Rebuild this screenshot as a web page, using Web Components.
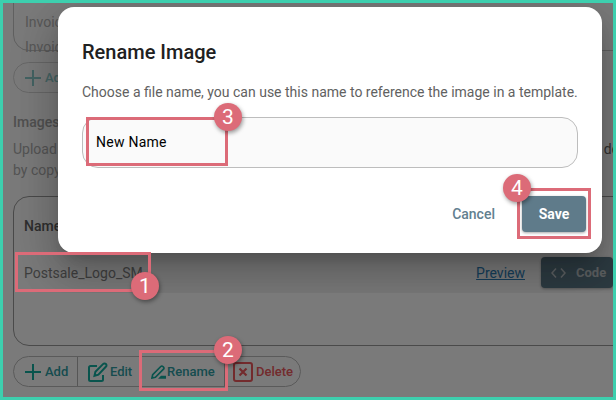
<!DOCTYPE html>
<html>
<head>
<meta charset="utf-8">
<style>
html, body { margin: 0; padding: 0; }
body { width: 616px; height: 400px; overflow: hidden; font-family: Roboto, "Liberation Sans", sans-serif; }
</style>
</head>
<body>
<shot-frame>
  <bg-page></bg-page>
  <rename-dialog slot="overlay"></rename-dialog>
  <call-out slot="overlay" n="1" x="15" y="252" w="136" h="40" bx="145" by="286"></call-out>
  <call-out slot="overlay" n="2" x="139" y="350" w="89" h="41" bx="228" by="350"></call-out>
  <call-out slot="overlay" n="3" x="86" y="117" w="142" h="49" bx="228" by="117"></call-out>
  <call-out slot="overlay" n="4" x="517" y="188" w="74" h="51" bx="517" by="188"></call-out>
</shot-frame>

<script>
class ShotFrame extends HTMLElement {
    connectedCallback() {
        this.attachShadow({ mode: 'open' });
        this.shadowRoot.innerHTML = `
            <style>
                :host {
                    display: block;
                    position: relative;
                    width: 616px;
                    height: 400px;
                    box-sizing: border-box;
                    border: 3px solid #3dcfae;
                    overflow: hidden;
                    background: #fff;
                }
                .backdrop {
                    position: absolute;
                    inset: 0;
                    background: rgba(0, 0, 0, 0.52);
                }
                .overlay {
                    position: absolute;
                    left: -3px;
                    top: -3px;
                    width: 616px;
                    height: 400px;
                }
            </style>
            <slot></slot>
            <div class="backdrop"></div>
            <div class="overlay"><slot name="overlay"></slot></div>
        `;
    }
}

class ToolButton extends HTMLElement {
    connectedCallback() {
        this.attachShadow({ mode: 'open' });
        this.shadowRoot.innerHTML = `
            <style>
                :host {
                    display: flex;
                    align-items: center;
                    height: 100%;
                    box-sizing: border-box;
                    font: 500 13px Roboto, sans-serif;
                    color: var(--tool-color, #2f9fa5);
                    border-right: 1px solid #b4b4b4;
                }
                :host(:last-child) { border-right: 0; }
                ::slotted(svg) { display: block; flex: none; color: var(--icon-color, #14b0a2); }
            </style>
            <slot></slot>
        `;
    }
}

class BgPage extends HTMLElement {
    connectedCallback() {
        this.attachShadow({ mode: 'open' });
        this.shadowRoot.innerHTML = `
            <style>
                :host {
                    display: block;
                    height: 394px;
                    padding-left: 10px;
                    font: 14px Roboto, sans-serif;
                    color: #858585;
                    overflow: hidden;
                }
                .top-card {
                    box-sizing: border-box;
                    width: 640px;
                    height: 70px;
                    margin-top: -22px;
                    border: 1px solid #c8c8c8;
                    border-radius: 16px;
                    padding: 28px 0 0 11px;
                    line-height: 25px;
                    color: #b8b8b8;
                }
                .group {
                    display: inline-flex;
                    box-sizing: border-box;
                    height: 31px;
                    border: 1px solid #bdbdbd;
                    border-radius: 16px;
                }
                .add-pill { display: flex; margin-top: 11px; width: 64px; border-color: #d8d8d8; }
                .add-pill div {
                    display: flex;
                    align-items: center;
                    gap: 4px;
                    padding-left: 11px;
                    font-size: 13px;
                    font-weight: 500;
                    color: #90d0d0;
                }
                h3 {
                    margin: 19px 0 0;
                    font: 500 14px/20px Roboto, sans-serif;
                    color: #a8a8a8;
                }
                .help { margin-top: 7px; line-height: 21px; color: #b0b0b0; }
                .help div { display: flex; justify-content: space-between; width: 606px; }
                .help div span:last-child { color: #666; }
                .file-card {
                    box-sizing: border-box;
                    width: 640px;
                    height: 150px;
                    margin-top: 15px;
                    border: 1px solid #9c9c9c;
                    border-radius: 16px;
                    padding: 19px 0 0 10px;
                }
                .file-card b { display: block; font-weight: 500; line-height: 20px; color: #626262; }
                .file-row {
                    display: flex;
                    align-items: center;
                    width: 589px;
                    height: 31px;
                    margin-top: 21px;
                }
                .file-row a {
                    margin-left: auto;
                    margin-right: 16px;
                    color: #2f83bd;
                    text-decoration: underline;
                }
                .code {
                    display: flex;
                    align-items: center;
                    box-sizing: border-box;
                    width: 72px;
                    height: 31px;
                    padding-left: 10px;
                    gap: 10px;
                    border-radius: 4px;
                    background: #5f7b8a;
                    color: #c3cace;
                    font-weight: 700;
                    font-size: 13px;
                    box-shadow: 0 1px 3px rgba(0, 0, 0, 0.3);
                }
                .tools { display: flex; margin-top: 10px; }
                .tools .group { width: 288px; }
                .t-add { width: 64px; padding-left: 11px; gap: 4px; box-sizing: border-box; }
                .t-edit { width: 63px; padding-left: 10px; gap: 2px; box-sizing: border-box; }
                .t-rename { width: 84px; padding-left: 10px; gap: 1px; box-sizing: border-box; }
                .t-delete { flex: 1; padding-left: 8px; gap: 3px; box-sizing: border-box; --tool-color: #f05a5e; --icon-color: #f05a5e; }
            </style>
            <div class="top-card">Invoice<br>Invoice</div>
            <div class="group add-pill">
                <div>
                    <svg width="16" height="16" viewBox="0 0 16 16"><path d="M8 0v16M0 8h16" stroke="#8fd0d0" stroke-width="2" fill="none"/></svg>
                    Add
                </div>
            </div>
            <h3>Images</h3>
            <div class="help">
                <div><span>Upload</span><span>de</span></div>
                <div>by copy</div>
            </div>
            <div class="file-card">
                <b>Name</b>
                <div class="file-row">
                    <span>Postsale_Logo_SM</span>
                    <a>Preview</a>
                    <div class="code">
                        <svg width="15" height="12" viewBox="0 0 15 12"><path d="M5 1.500 1 6l4 4.500M10 1.500 14 6l-4 4.500" stroke="#c3cace" stroke-width="1.500" fill="none"/></svg>
                        Code
                    </div>
                </div>
            </div>
            <div class="tools">
                <div class="group">
                    <tool-button class="t-add">
                        <svg width="16" height="16" viewBox="0 0 16 16"><path d="M8 0v16M0 8h16" stroke="currentColor" stroke-width="2" fill="none"/></svg>
                        Add
                    </tool-button>
                    <tool-button class="t-edit">
                        <svg width="20" height="20" viewBox="0 0 20 20" fill="none" stroke="currentColor"><path d="M9 4H2.500C1.600 4 1 4.600 1 5.500v12C1 18.400 1.600 19 2.500 19h11c.9 0 1.500-.6 1.500-1.500V13" stroke-width="2"/><path d="M6.500 13.800l.9-4 7.600-7.700c.9-.9 2.100-.9 2.900-.1.800.8.800 2-.1 2.800l-7.400 7.800z" stroke-width="2"/></svg>
                        Edit
                    </tool-button>
                    <tool-button class="t-rename">
                        <svg width="15" height="14" viewBox="0 0 15 14" fill="none" stroke="currentColor"><path d="M1 13l.7-3.400L9.800 1.500c.6-.6 1.500-.6 2.100 0l.6.6c.6.6.6 1.500 0 2.100L4.400 12.300z" stroke-width="1.700"/><path d="M7 13.800 10 10.800h5v3z" fill="currentColor" stroke="none"/></svg>
                        Rename
                    </tool-button>
                    <tool-button class="t-delete">
                        <svg width="20" height="20" viewBox="0 0 20 20" fill="none" stroke="currentColor"><rect x="1" y="1" width="18" height="18" rx="2" stroke-width="2"/><path d="M6.500 6.500l7 7M13.500 6.500l-7 7" stroke-width="2.200"/></svg>
                        Delete
                    </tool-button>
                </div>
            </div>
        `;
    }
}

class RenameDialog extends HTMLElement {
    connectedCallback() {
        this.attachShadow({ mode: 'open' });
        this.shadowRoot.innerHTML = `
            <style>
                :host {
                    position: absolute;
                    left: 0;
                    top: 0;
                    width: 616px;
                    height: 293px;
                    overflow: hidden;
                    display: block;
                }
                .box {
                    position: absolute;
                    left: 58px;
                    top: 7px;
                    width: 544px;
                    height: 246px;
                    box-sizing: border-box;
                    padding: 33px 24px 0;
                    background: #fff;
                    border-radius: 16px;
                    box-shadow: 0 11px 15px -7px rgba(0, 0, 0, 0.2), 0 24px 38px 3px rgba(0, 0, 0, 0.14), 0 9px 46px 8px rgba(0, 0, 0, 0.12);
                }
                h2 {
                    margin: 0;
                    font: 500 20px/24px Roboto, sans-serif;
                    color: #212121;
                }
                p {
                    margin: 18px 0 0;
                    font: 14px/20px Roboto, sans-serif;
                    color: #616161;
                    white-space: nowrap;
                }
                .field {
                    box-sizing: border-box;
                    height: 51px;
                    margin-top: 15px;
                    padding: 0 0 2px 13px;
                    display: flex;
                    align-items: center;
                    background: #fafafa;
                    border: 1px solid #bdbdbd;
                    border-radius: 16px;
                    font: 14px Roboto, sans-serif;
                    letter-spacing: .25px;
                    color: #000;
                }
                .actions {
                    display: flex;
                    justify-content: flex-end;
                    align-items: center;
                    gap: 27px;
                    margin-top: 28px;
                    font: 500 14px Roboto, sans-serif;
                }
                .cancel { color: #62808f; }
                .save {
                    display: flex;
                    align-items: center;
                    justify-content: center;
                    width: 64px;
                    height: 36px;
                    margin-right: -8px;
                    border-radius: 4px;
                    background: #5f7b8a;
                    color: #fff;
                    font-weight: 700;
                    box-shadow: 0 1px 3px rgba(0, 0, 0, 0.35);
                }
            </style>
            <div class="box">
                <h2>Rename Image</h2>
                <p>Choose a file name, you can use this name to reference the image in a template.</p>
                <div class="field">New Name</div>
                <div class="actions">
                    <span class="cancel">Cancel</span>
                    <span class="save">Save</span>
                </div>
            </div>
        `;
    }
}

// numbered red marker: a frame plus a round badge, placed by attributes
class CallOut extends HTMLElement {
    connectedCallback() {
        const a = n => this.getAttribute(n);
        this.attachShadow({ mode: 'open' });
        this.shadowRoot.innerHTML = `
            <style>
                :host { display: block; }
                .frame {
                    position: absolute;
                    left: ${a('x')}px;
                    top: ${a('y')}px;
                    width: ${a('w')}px;
                    height: ${a('h')}px;
                    box-sizing: border-box;
                    border: 3px solid #dc6b78;
                }
                .badge {
                    position: absolute;
                    left: ${a('bx') - 14}px;
                    top: ${a('by') - 14}px;
                    width: 28px;
                    height: 28px;
                    display: flex;
                    align-items: center;
                    justify-content: center;
                    border-radius: 50%;
                    background: #dc6b78;
                    color: #fff;
                    font: 21px Roboto, sans-serif;
                    box-shadow: 1px 2px 4px rgba(0, 0, 0, 0.4);
                }
            </style>
            <div class="frame"></div>
            <div class="badge">${a('n')}</div>
        `;
    }
}

customElements.define('shot-frame', ShotFrame);
customElements.define('tool-button', ToolButton);
customElements.define('bg-page', BgPage);
customElements.define('rename-dialog', RenameDialog);
customElements.define('call-out', CallOut);
</script>
</body>
</html>
